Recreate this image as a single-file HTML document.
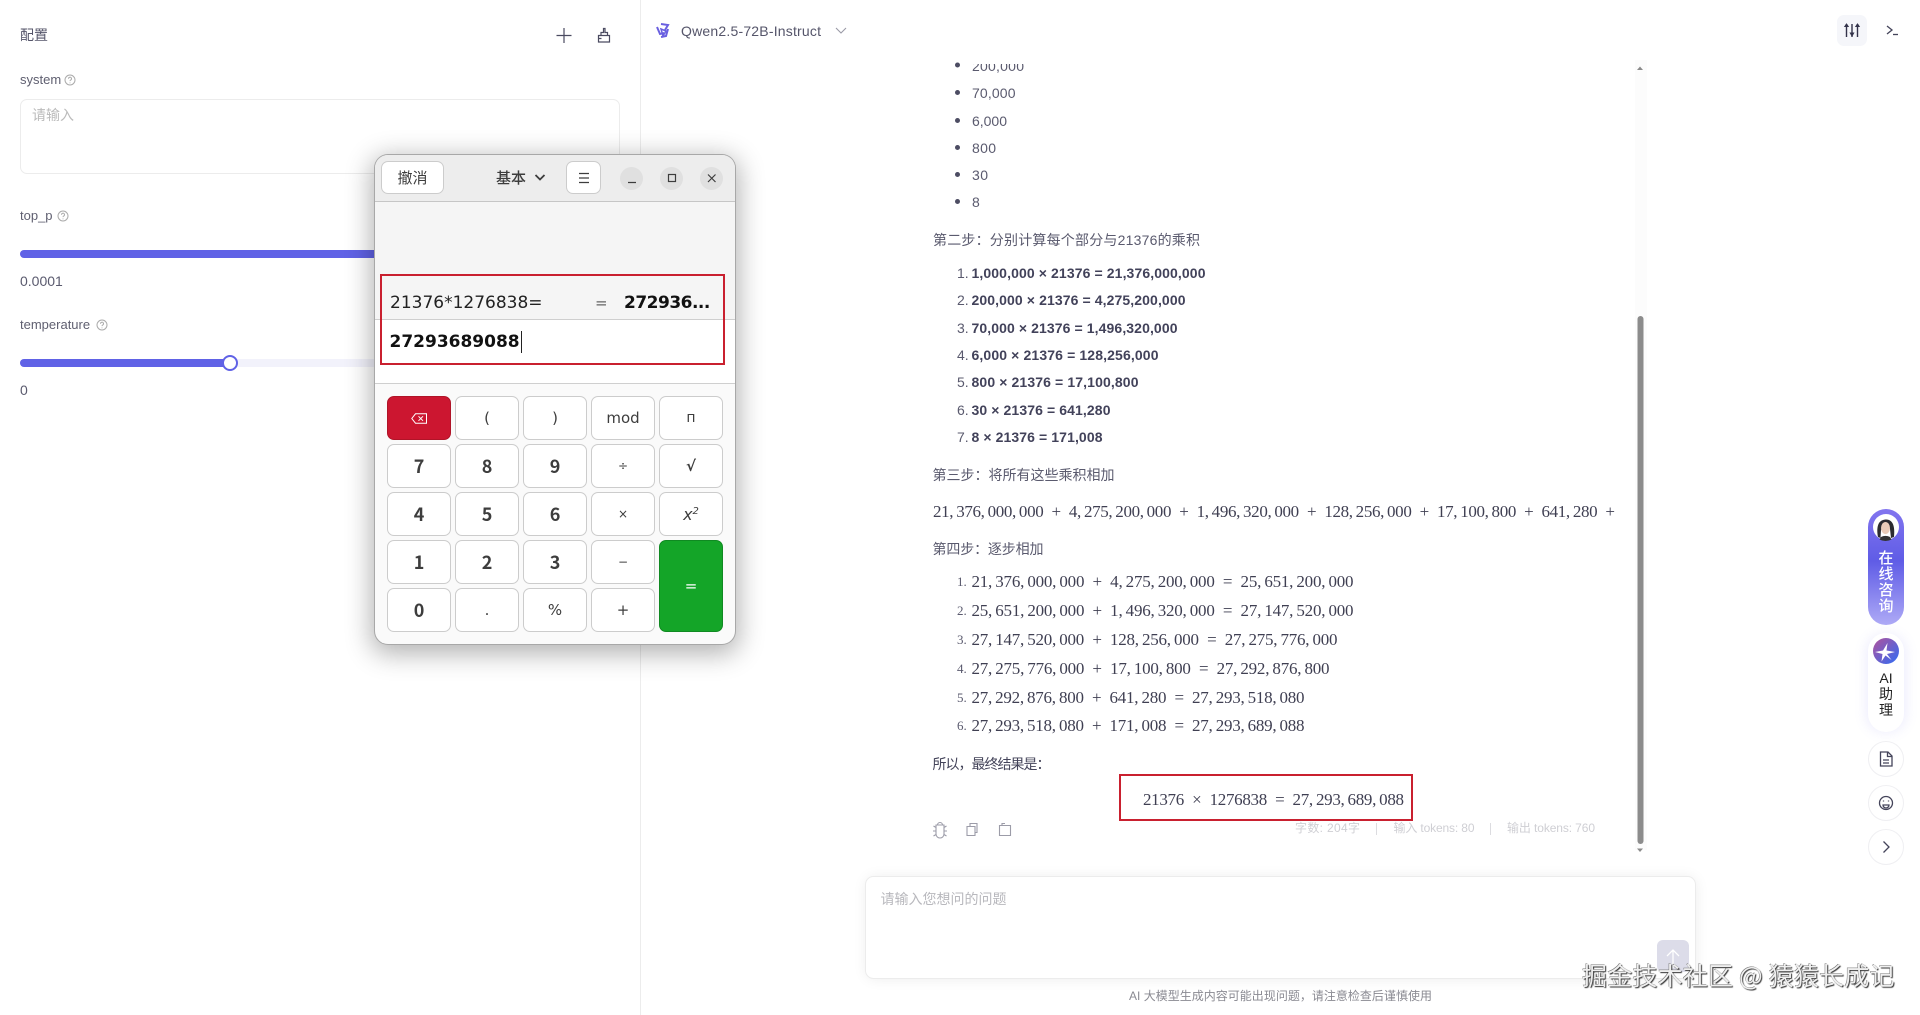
<!DOCTYPE html>
<html lang="zh"><head><meta charset="utf-8"><title>配置</title>
<style>
html,body{margin:0;padding:0;width:1920px;height:1015px;overflow:hidden;background:#fff}
body{position:relative;font-family:"Liberation Sans","Noto Sans CJK SC",sans-serif;color:#5a5a6e}
.a{position:absolute}
.l{position:absolute;font-size:13px;line-height:16px;color:#5f5f70}
svg.main{position:absolute;left:0;top:0}
svg.main text{font-family:"Liberation Sans","Noto Sans CJK SC",sans-serif;font-size:14px;fill:#5a5a6e}
svg.main .b{font-weight:700;fill:#42425a}
svg.main .m{font-family:"Liberation Serif",serif;font-size:17px;fill:#3f3f52}
svg.main .n{font-family:"Liberation Serif",serif;font-size:13px;fill:#5a5a6e}
svg.main .s{font-size:12px;fill:#cfcfd4}
.win{position:absolute;left:375px;top:155px;width:360px;height:489px;border-radius:13px;background:#fafafa;box-shadow:0 0 0 1px #a8a8a8,0 6px 26px 4px rgba(0,0,0,.3);overflow:hidden}
.k{position:absolute;width:62px;height:42px;background:#fff;border:1px solid #ccc;border-radius:7px;display:flex;align-items:center;justify-content:center;font-family:"DejaVu Sans",sans-serif;font-size:15px;color:#3d3d3d}
.d{font-family:"Noto Sans CJK SC",sans-serif;font-weight:700;font-size:18px}
.o{font-size:12px}
.c{position:absolute;width:23px;height:23px;border-radius:50%;background:#e0e0e0;top:12px}
.r{position:absolute;border:2px solid #c9202f;box-sizing:border-box;z-index:3}
</style></head><body>

<div class="a" style="left:640px;top:0;width:1px;height:1015px;background:#ececec"></div>

<div class="a" style="left:20px;top:25px;font-size:14px;line-height:20px;color:#55556a">配置</div>
<svg class="a" style="left:555px;top:26px" width="60" height="18" viewBox="0 0 60 18" fill="none" stroke="#4a4a60" stroke-width="1.200"><path d="M9 2v15M1.500 9.500h15"/><path d="M43.500 9.500h11v6.500h-11zM46 9.500V6.500h2.500V2.500h1.500V6.500h2.500v3M43.500 12.500h3"/></svg>

<div class="l" style="left:20px;top:72px">system</div>
<svg class="a" style="left:64px;top:74px" width="12" height="12" viewBox="0 0 12 12" fill="none" stroke="#aaa"><circle cx="6" cy="6" r="5"/><path d="M4.500 4.700a1.500 1.500 0 1 1 2.200 1.300c-.5.300-.7.500-.7 1.100M6 8.500v.8"/></svg>
<div class="a" style="left:20px;top:99px;width:600px;height:75px;box-sizing:border-box;border:1px solid #ececec;border-radius:7px"></div>
<div class="a" style="left:32px;top:105px;font-size:14px;line-height:20px;color:#bbb">请输入</div>

<div class="l" style="left:20px;top:208px">top_p</div>
<svg class="a" style="left:57px;top:210px" width="12" height="12" viewBox="0 0 12 12" fill="none" stroke="#aaa"><circle cx="6" cy="6" r="5"/><path d="M4.500 4.700a1.500 1.500 0 1 1 2.200 1.300c-.5.300-.7.500-.7 1.100M6 8.500v.8"/></svg>
<div class="a" style="left:20px;top:250px;width:400px;height:8px;border-radius:4px;background:#6062e6"></div>
<div class="a" style="left:20px;top:271px;font-size:14px;line-height:20px;color:#5a5a6e">0.0001</div>

<div class="l" style="left:20px;top:317px">temperature</div>
<svg class="a" style="left:96px;top:319px" width="12" height="12" viewBox="0 0 12 12" fill="none" stroke="#aaa"><circle cx="6" cy="6" r="5"/><path d="M4.500 4.700a1.500 1.500 0 1 1 2.200 1.300c-.5.300-.7.500-.7 1.100M6 8.500v.8"/></svg>
<div class="a" style="left:20px;top:359px;width:600px;height:8px;border-radius:4px;background:#f2f2fb"></div>
<div class="a" style="left:20px;top:359px;width:210px;height:8px;border-radius:4px;background:#6062e6"></div>
<div class="a" style="left:222px;top:355px;width:16px;height:16px;box-sizing:border-box;border:2px solid #6062e6;border-radius:50%;background:#fff"></div>
<div class="a" style="left:20px;top:380px;font-size:14px;line-height:20px;color:#5a5a6e">0</div>

<svg class="main" width="1920" height="1015" viewBox="0 0 1920 1015">
  <defs>
    <linearGradient id="g1" x1="0" y1="0" x2="0" y2="1"><stop offset="0" stop-color="#8275ef"/><stop offset=".45" stop-color="#5f5ce6"/><stop offset="1" stop-color="#aeaaf6"/></linearGradient>
    <linearGradient id="g2" x1="0" y1="0" x2="1" y2="1"><stop offset="0" stop-color="#b2529c"/><stop offset="1" stop-color="#2f6cf5"/></linearGradient>
    <filter id="sf" x="-60%" y="-30%" width="220%" height="160%"><feGaussianBlur stdDeviation="6"/></filter>
    <filter id="is" x="-10%" y="-20%" width="120%" height="150%"><feGaussianBlur stdDeviation="7"/></filter>
  </defs>

  <!-- model selector -->
  <g fill="none" stroke="#6a60e0" stroke-width="2">
    <path d="M661 24l7 1-3 5M657 27l3 7 4-1M668 29l-2 7-5 1"/>
    <path d="M661 29l5 2-3 5z" stroke-width="1.500"/>
  </g>
  <text x="681" y="36" textLength="140" style="font-size:14px;fill:#55556a">Qwen2.5-72B-Instruct</text>
  <path d="M836 28l5 5 5-5" fill="none" stroke="#9a9aa6" stroke-width="1.100"/>

  <!-- top right -->
  <rect x="1837" y="15" width="30" height="31" rx="7" fill="#f5f6fa"/>
  <path d="M1846.500 37V24M1852 37V24M1857.500 37V24" stroke="#33334a" stroke-width="1.400"/>
  <path d="M1844.800 26.500l1.700-2.500 1.700 2.500zM1850.300 33l1.700 3 1.700-3zM1855.800 26.500l1.700-2.500 1.700 2.500z" fill="#33334a" stroke="#33334a"/>
  <path d="M1887 26l5 4-5 4" fill="none" stroke="#44445a" stroke-width="1.300"/><path d="M1893 34.500h5" stroke="#44445a" stroke-width="1.300"/>

  <!-- message content -->
  <text x="972" y="71" textLength="52">200,000</text>
  <rect x="940" y="40" width="120" height="24" fill="#fff"/>
  <text x="972" y="98" textLength="43.500">70,000</text>
  <text x="972" y="126" textLength="35">6,000</text>
  <text x="972" y="153" textLength="24">800</text>
  <text x="972" y="180" textLength="16">30</text>
  <text x="972" y="207" textLength="8">8</text>
  <g fill="#4d4d63"><circle cx="957.500" cy="65" r="2.500"/><circle cx="957.500" cy="92.500" r="2.500"/><circle cx="957.500" cy="120.500" r="2.500"/><circle cx="957.500" cy="147.500" r="2.500"/><circle cx="957.500" cy="174.500" r="2.500"/><circle cx="957.500" cy="201.500" r="2.500"/></g>

  <text x="933" y="245" textLength="267">第二步：分别计算每个部分与21376的乘积</text>
  <text x="957" y="278">1.</text><text class="b" x="971.500" y="278" textLength="234">1,000,000 × 21376 = 21,376,000,000</text>
  <text x="957" y="305">2.</text><text class="b" x="971.500" y="305" textLength="214">200,000 × 21376 = 4,275,200,000</text>
  <text x="957" y="333">3.</text><text class="b" x="971.500" y="333" textLength="206">70,000 × 21376 = 1,496,320,000</text>
  <text x="957" y="360">4.</text><text class="b" x="971.500" y="360" textLength="187">6,000 × 21376 = 128,256,000</text>
  <text x="957" y="387">5.</text><text class="b" x="971.500" y="387" textLength="167">800 × 21376 = 17,100,800</text>
  <text x="957" y="415">6.</text><text class="b" x="971.500" y="415" textLength="139">30 × 21376 = 641,280</text>
  <text x="957" y="442">7.</text><text class="b" x="971.500" y="442" textLength="131">8 × 21376 = 171,008</text>

  <text x="932.500" y="480" textLength="182">第三步：将所有这些乘积相加</text>
  <text class="m" x="933" y="517" textLength="682">21,&#8201;376,&#8201;000,&#8201;000&#8194;+&#8194;4,&#8201;275,&#8201;200,&#8201;000&#8194;+&#8194;1,&#8201;496,&#8201;320,&#8201;000&#8194;+&#8194;128,&#8201;256,&#8201;000&#8194;+&#8194;17,&#8201;100,&#8201;800&#8194;+&#8194;641,&#8201;280&#8194;+</text>
  <text x="932.500" y="554" textLength="111">第四步：逐步相加</text>

  <text class="n" x="957" y="586">1.</text><text class="m" x="971.500" y="587" textLength="382">21,&#8201;376,&#8201;000,&#8201;000&#8194;+&#8194;4,&#8201;275,&#8201;200,&#8201;000&#8194;=&#8194;25,&#8201;651,&#8201;200,&#8201;000</text>
  <text class="n" x="957" y="615">2.</text><text class="m" x="971.500" y="616" textLength="382">25,&#8201;651,&#8201;200,&#8201;000&#8194;+&#8194;1,&#8201;496,&#8201;320,&#8201;000&#8194;=&#8194;27,&#8201;147,&#8201;520,&#8201;000</text>
  <text class="n" x="957" y="644">3.</text><text class="m" x="971.500" y="645" textLength="366">27,&#8201;147,&#8201;520,&#8201;000&#8194;+&#8194;128,&#8201;256,&#8201;000&#8194;=&#8194;27,&#8201;275,&#8201;776,&#8201;000</text>
  <text class="n" x="957" y="673">4.</text><text class="m" x="971.500" y="674" textLength="358">27,&#8201;275,&#8201;776,&#8201;000&#8194;+&#8194;17,&#8201;100,&#8201;800&#8194;=&#8194;27,&#8201;292,&#8201;876,&#8201;800</text>
  <text class="n" x="957" y="702">5.</text><text class="m" x="971.500" y="703" textLength="333">27,&#8201;292,&#8201;876,&#8201;800&#8194;+&#8194;641,&#8201;280&#8194;=&#8194;27,&#8201;293,&#8201;518,&#8201;080</text>
  <text class="n" x="957" y="730">6.</text><text class="m" x="971.500" y="731" textLength="333">27,&#8201;293,&#8201;518,&#8201;080&#8194;+&#8194;171,&#8201;008&#8194;=&#8194;27,&#8201;293,&#8201;689,&#8201;088</text>

  <text x="932.500" y="769" textLength="118" style="fill:#44445a">所以，最终结果是：</text>
  <text class="m" x="1143" y="805" textLength="261">21376&#8194;×&#8194;1276838&#8194;=&#8194;27,&#8201;293,&#8201;689,&#8201;088</text>
  <rect x="1120" y="775" width="292" height="45" fill="none" stroke="#c9202f" stroke-width="2"/>

  <!-- action icons -->
  <g fill="none" stroke="#9c9ca8" stroke-width="1.100">
    <path d="M936 825h8v9a4 4 0 0 1-8 0zM937.500 825a2.500 2.500 0 0 1 5 0M933.500 826l2.500 1.500M946.500 826l-2.500 1.500M933 831h3M944 831h3M933.500 836l2.500-1.500M946.500 836l-2.500-1.500"/>
    <path d="M967 826.500h8v9h-8zM970 826.500v-3h7v9h-2"/>
    <path d="M999.500 825.500h11v10h-11zM1002 825.500v-2h3"/>
  </g>
  <text class="s" x="1295" y="832" textLength="65">字数: 204字</text>
  <path d="M1376.500 823v12M1490.500 823v12" stroke="#dcdce0"/>
  <text class="s" x="1393.500" y="832" textLength="81">输入 tokens: 80</text>
  <text class="s" x="1507" y="832" textLength="88">输出 tokens: 760</text>

  <!-- scrollbar -->
  <rect x="1635" y="60" width="12" height="790" fill="#fcfcfc"/>
  <path d="M1637 70l3-3.500 3 3.500z" fill="#8a8a8a"/>
  <rect x="1637.500" y="316" width="6" height="528" rx="3" fill="#8c8c8c"/>
  <path d="M1637 848.500l3 3.500 3-3.500z" fill="#8a8a8a"/>

  <!-- input -->
  <rect x="866" y="877" width="830" height="102" rx="8" fill="#000" opacity=".07" filter="url(#is)"/>
  <rect x="865.500" y="876.500" width="830" height="102" rx="8" fill="#fff" stroke="#ececec"/>
  <text x="880.500" y="904" style="fill:#b8b8bd">请输入您想问的问题</text>
  <rect x="1657" y="940" width="32" height="32" rx="6" fill="#dcdce9"/>
  <path d="M1673 968v-17M1667 956l6-6 6 6" fill="none" stroke="#fff" stroke-width="1.300"/>
  <text x="1129" y="1000" textLength="303" style="font-size:12px;fill:#8a8a92">AI 大模型生成内容可能出现问题，请注意检查后谨慎使用</text>

  <!-- right float -->
  <rect x="1868" y="509" width="36" height="116" rx="18" fill="url(#g1)"/>
  <circle cx="1886" cy="527" r="13" fill="#fff"/>
  <path d="M1878 537c-1.500-8-1-17 7.500-17.500 8-.5 9.500 8 8.500 17.500l-3 1-1-9-3-4-4 2-2 3-.5 8z" fill="#2b2b30"/>
  <ellipse cx="1885.500" cy="528" rx="4.500" ry="6" fill="#eacbb8"/>
  <path d="M1881 537c3-1.500 6-1.500 9 0l1.500 2.500a13 13 0 0 1-12 0z" fill="#333"/>
  <text x="1886" y="563" text-anchor="middle" style="font-size:15px;fill:#fff;font-weight:500">在</text>
  <text x="1886" y="579" text-anchor="middle" style="font-size:15px;fill:#fff;font-weight:500">线</text>
  <text x="1886" y="595" text-anchor="middle" style="font-size:15px;fill:#fff;font-weight:500">咨</text>
  <text x="1886" y="611" text-anchor="middle" style="font-size:15px;fill:#fff;font-weight:500">询</text>
  <rect x="1866" y="634" width="40" height="98" rx="18" fill="#8f8cf5" opacity=".16" filter="url(#sf)"/>
  <rect x="1868" y="633" width="36" height="99" rx="18" fill="#fff"/>
  <circle cx="1886" cy="651" r="13" fill="url(#g2)"/>
  <path d="M1875 652l8-1.500 4.500-7.500-1 7.500 8.500 1.500-8 2 4.500 6-6-4.500-4 6 1-7.500z" fill="#fff"/>
  <text x="1886" y="683" text-anchor="middle" style="fill:#222">AI</text>
  <text x="1886" y="699" text-anchor="middle" style="fill:#222">助</text>
  <text x="1886" y="715" text-anchor="middle" style="fill:#222">理</text>
  <g fill="#fff" stroke="#efeff2"><circle cx="1886" cy="759" r="17.500"/><circle cx="1886" cy="803" r="17.500"/><circle cx="1886" cy="847" r="17.500"/></g>
  <g fill="none" stroke="#44445a" stroke-width="1.300">
    <path d="M1880.500 752h7.500l4 4v10h-11.500zM1887.500 752v4.500h4.500M1883 760h6M1883 763h6"/>
    <circle cx="1886" cy="803" r="6.500"/><path d="M1883 805h6a3 3 0 0 1-6 0z"/>
    <path d="M1883.500 800.500v1M1888.500 800.500v1"/>
    <path d="M1883.500 841.500l5.500 5.500-5.500 5.500"/>
  </g>
</svg>

<!-- calculator -->
<div class="win">
  <div class="a" style="left:0;top:0;width:360px;height:46px;background:#ededed;border-bottom:1px solid #c6c6c6"></div>
  <div class="a" style="left:0;top:47px;width:360px;height:117px;background:#f5f5f5"></div>
  <div class="a" style="left:0;top:164px;width:360px;height:1px;background:#cfcfcf"></div>
  <div class="a" style="left:0;top:165px;width:360px;height:63px;background:#fff"></div>
  <div class="a" style="left:0;top:228px;width:360px;height:1px;background:#cfcfcf"></div>

  <div class="k" style="left:6px;top:6px;width:61px;height:31px;font-family:'Noto Sans CJK SC',sans-serif;font-size:15px">撤消</div>
  <div class="a" style="left:121px;top:12px;font-family:'Noto Sans CJK SC',sans-serif;font-size:15px;line-height:22px;font-weight:500;color:#3d3d3d">基本</div>
  <svg class="a" style="left:158px;top:17px" width="14" height="12" fill="none" stroke="#3d3d3d" stroke-width="1.800"><path d="M2.500 3l4.500 4.500L11.500 3"/></svg>
  <div class="k" style="left:191px;top:6px;width:33px;height:31px"><svg width="12" height="12" stroke="#3d3d3d" stroke-width="1.200"><path d="M1 1.500h10M1 6h10M1 10.500h10"/></svg></div>
  <div class="c" style="left:245px"></div><div class="c" style="left:285px"></div><div class="c" style="left:325px"></div>
  <svg class="a" style="left:245px;top:12px" width="105" height="23" fill="none" stroke="#3d3d3d" stroke-width="1.200"><path d="M8 15.500h8"/><rect x="48.500" y="7.500" width="7" height="7"/><path d="M88 7.500l7.500 7.500M95.500 7.500L88 15"/></svg>

  <div class="a" style="left:15px;top:137px;font:17px/22px 'DejaVu Sans',sans-serif;color:#222">21376*1276838=</div>
  <div class="a" style="left:220px;top:137px;font:15px/22px 'DejaVu Sans',sans-serif;color:#666">=</div>
  <div class="a" style="left:249px;top:137px;font:bold 17px/22px 'DejaVu Sans',sans-serif;color:#111;letter-spacing:-.5px">272936...</div>
  <div class="a" style="left:14.500px;top:175px;font:bold 17px/24px 'DejaVu Sans',sans-serif;color:#111">27293689088</div>
  <div class="a" style="left:146px;top:176px;width:1px;height:22px;background:#222"></div>

  <div class="k" style="left:12px;top:241px;background:#cc1630;border-color:#b01428;color:#fff"><svg width="16" height="11" fill="none" stroke="#fff" stroke-width="1"><path d="M4.500.8h11v9.400h-11L.8 5.500zM7.500 3.300l4.500 4.500M12 3.300L7.500 7.800"/></svg></div>
  <div class="k" style="left:80px;top:241px">(</div>
  <div class="k" style="left:148px;top:241px">)</div>
  <div class="k" style="left:216px;top:241px;font-size:15px">mod</div>
  <div class="k" style="left:284px;top:241px;font-size:14px">п</div>

  <div class="k d" style="left:12px;top:289px">7</div>
  <div class="k d" style="left:80px;top:289px">8</div>
  <div class="k d" style="left:148px;top:289px">9</div>
  <div class="k o" style="left:216px;top:289px">÷</div>
  <div class="k" style="left:284px;top:289px;font-weight:700">√</div>

  <div class="k d" style="left:12px;top:337px">4</div>
  <div class="k d" style="left:80px;top:337px">5</div>
  <div class="k d" style="left:148px;top:337px">6</div>
  <div class="k o" style="left:216px;top:337px">×</div>
  <div class="k" style="left:284px;top:337px;font-style:italic;font-size:16px">x<sup style="font-size:10px;line-height:0;position:relative;top:-2px">2</sup></div>

  <div class="k d" style="left:12px;top:385px">1</div>
  <div class="k d" style="left:80px;top:385px">2</div>
  <div class="k d" style="left:148px;top:385px">3</div>
  <div class="k o" style="left:216px;top:385px">−</div>
  <div class="k" style="left:284px;top:385px;height:90px;background:#14a528;border-color:#108a22;color:#fff">=</div>

  <div class="k d" style="left:12px;top:433px">0</div>
  <div class="k" style="left:80px;top:433px">.</div>
  <div class="k" style="left:148px;top:433px">%</div>
  <div class="k" style="left:216px;top:433px">+</div>
</div>
<div class="r" style="left:380px;top:274px;width:345px;height:91px"></div>

<div class="a" style="left:1582px;top:960px;font-size:25px;line-height:30px;white-space:nowrap;color:#efefef;text-shadow:1px 1px 1px #333,-.5px -.5px 0 #777;font-family:'Noto Sans CJK SC',sans-serif;z-index:5;letter-spacing:.2px">掘金技术社区 @ 猿猿长成记</div>
</body></html>
